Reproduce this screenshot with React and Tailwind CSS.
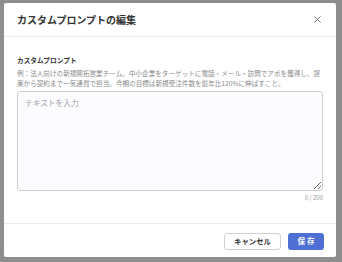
import React from 'react';

export default function App() {
  return (
    <div
      className="w-[342px] h-[262px] bg-[#8e8e8e] pt-[3px] pl-[4px] overflow-hidden"
      style={{ fontFamily: '"Noto Sans CJK JP", "Noto Sans", sans-serif' }}
    >
      <div className="w-[332px] h-[254px] bg-white flex flex-col rounded-[2px]">
        {/* Header */}
        <div className="h-[34px] px-[13px] flex items-center justify-between border-b border-[#ececec]">
          <h2 className="text-[10px] font-bold text-[#333] leading-none">カスタムプロンプトの編集</h2>
          <button className="text-[#777] mr-[2px]">
            <svg width="7" height="7" viewBox="0 0 10 10" stroke="currentColor" strokeWidth="1.4" strokeLinecap="round">
              <path d="M1 1L9 9M9 1L1 9" />
            </svg>
          </button>
        </div>

        {/* Body */}
        <div className="flex-1 px-[13px] pt-[19px]">
          <label className="block text-[6.7px] leading-[9px] font-bold text-[#333]">カスタムプロンプト</label>
          <p className="mt-[3px] text-[6.6px] leading-[10px] text-[#8a8a8a]">
            例：法人向けの新規開拓営業チーム。中小企業をターゲットに電話・メール・訪問でアポを獲得し、提案から契約まで一気通貫で担当。今期の目標は新規受注件数を前年比120%に伸ばすこと。
          </p>
          <textarea
            placeholder="テキストを入力"
            className="mt-[3px] block w-full h-[100px] rounded-[3px] border border-[#cfcfd4] bg-[#fcfcfe] px-[7px] py-[5px] text-[7.7px] leading-[12px] placeholder:text-[#a0a0a6] outline-none"
          />
          <div className="mt-[3px] text-right text-[6px] leading-[8px] text-[#9a9a9a]">0 / 200</div>
        </div>

        {/* Footer */}
        <div className="h-[34px] border-t border-[#ececec] px-[12px] pt-[1px] flex items-center justify-end gap-[7px]">
          <button className="w-[57px] h-[17px] rounded-[3px] border border-[#cfcfd4] bg-white text-[7.4px] font-bold text-[#333] leading-none">
            キャンセル
          </button>
          <button className="w-[36px] h-[17px] rounded-[3px] bg-[#4e6fd4] text-[7.6px] font-bold text-white leading-none tracking-[2px] pl-[2px]">
            保存
          </button>
        </div>
      </div>
    </div>
  );
}
